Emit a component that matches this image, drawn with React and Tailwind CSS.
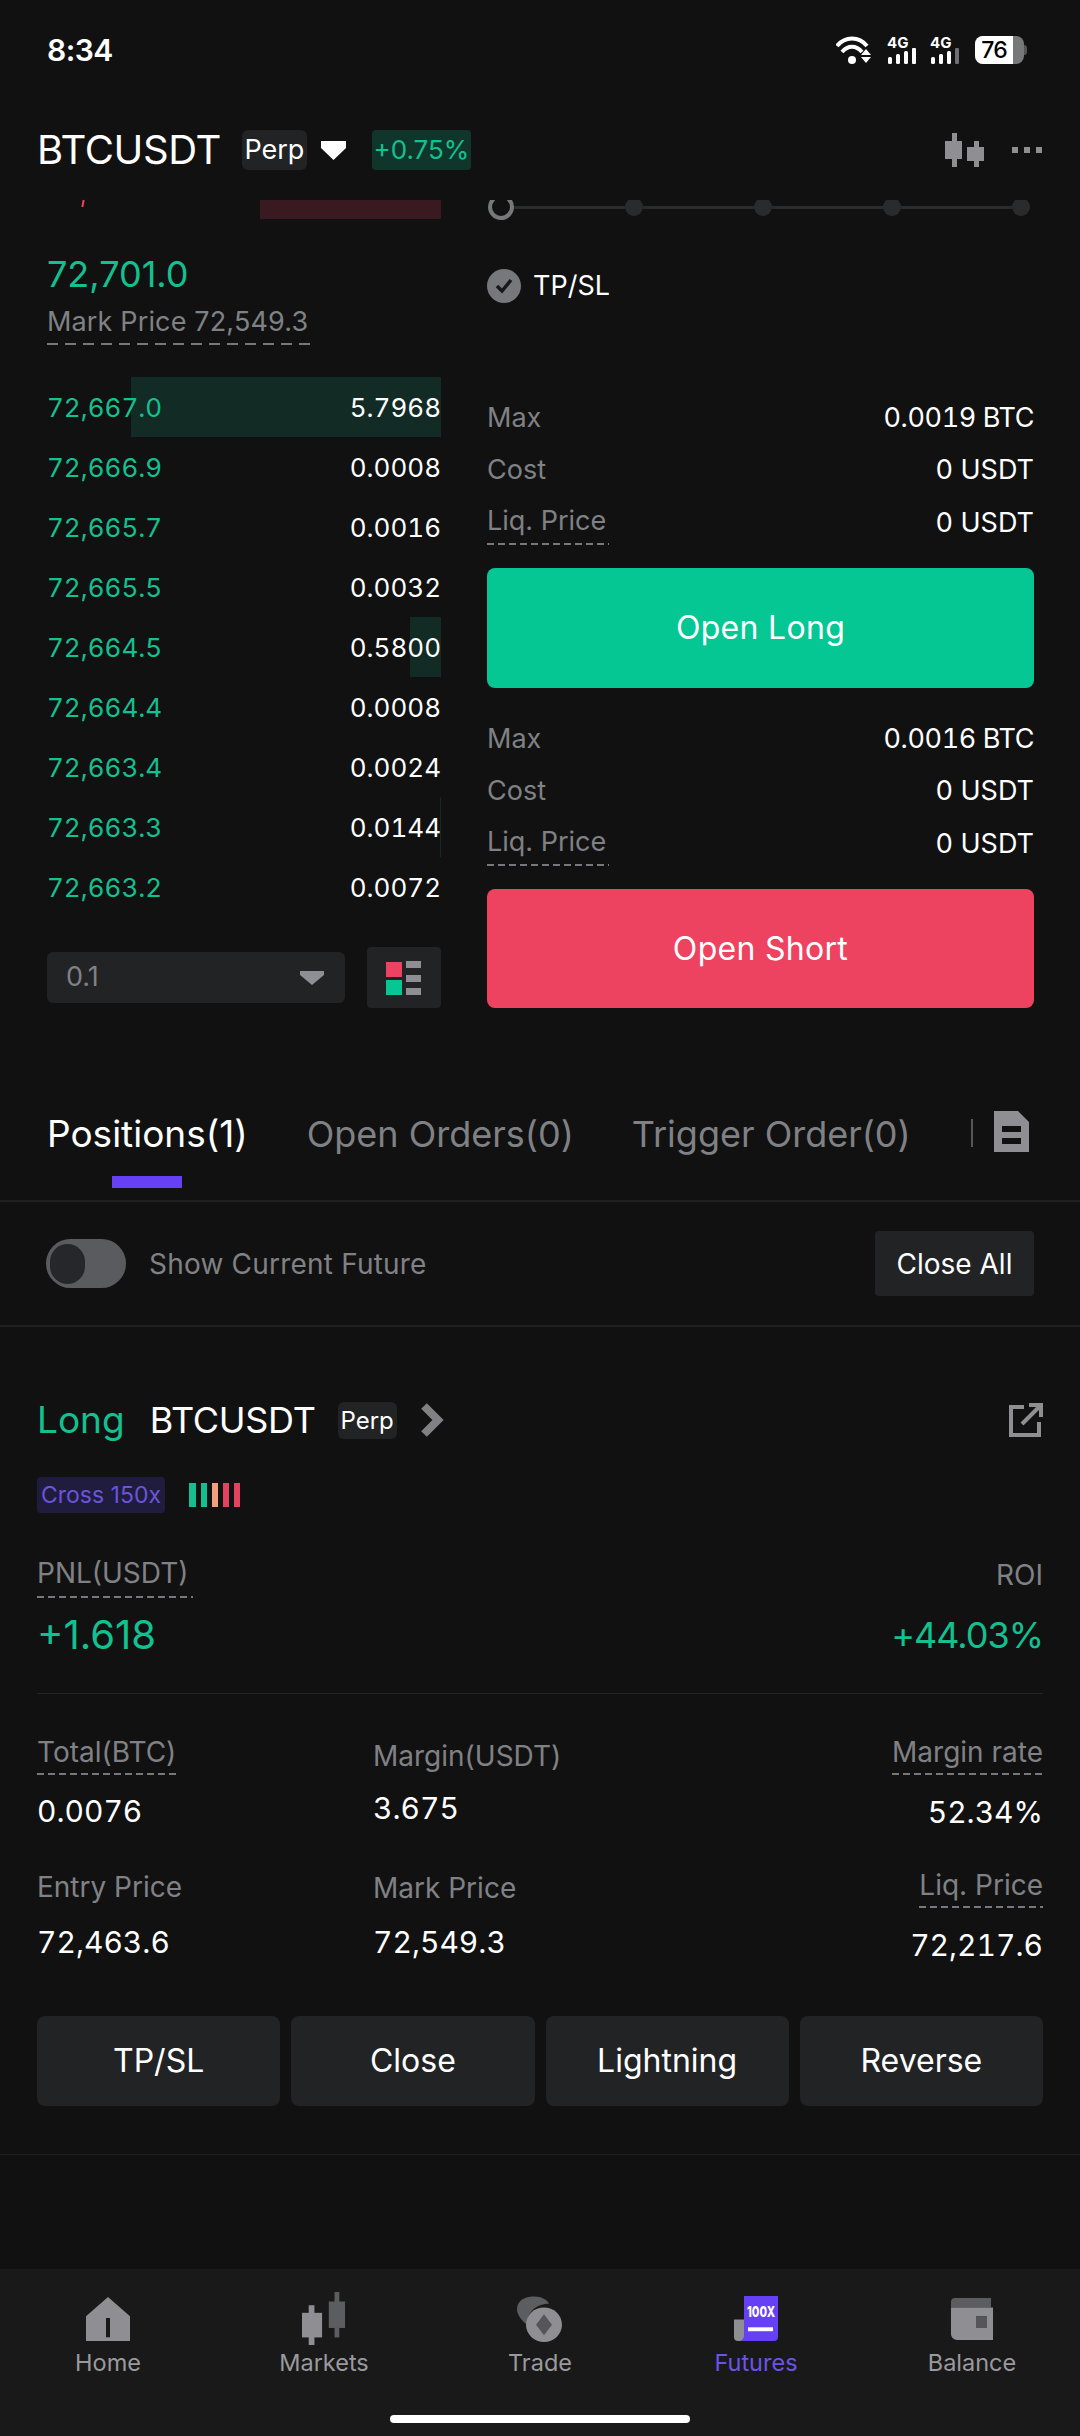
import React from 'react';

const asks = [
  ['72,667.0', '5.7968', 'w-[310px]'],
  ['72,666.9', '0.0008', 'w-0'],
  ['72,665.7', '0.0016', 'w-0'],
  ['72,665.5', '0.0032', 'w-0'],
  ['72,664.5', '0.5800', 'w-[31px]'],
  ['72,664.4', '0.0008', 'w-0'],
  ['72,663.4', '0.0024', 'w-0'],
  ['72,663.3', '0.0144', 'w-[1px]'],
  ['72,663.2', '0.0072', 'w-0'],
];

function Dash({ className = '' }) {
  return <div className={`h-[2px] bg-[repeating-linear-gradient(90deg,#77787b_0_7px,transparent_7px_11px)] ${className}`} />;
}

function StatusBar() {
  return (
    <div className="h-[100px] pl-[47px] pr-[53px] flex items-center justify-between">
      <span className="text-[30px] font-semibold text-white tracking-[-0.5px]">8:34</span>
      <div className="flex items-center gap-[13px]">
        <svg className="mr-[3px]" width="35" height="28" viewBox="0 0 35 28" fill="none">
          <path d="M1 10 C9 0 23 0 31 10" stroke="#fff" strokeWidth="4" />
          <path d="M6 16 C12 9 20 9 26 16" stroke="#fff" strokeWidth="4" />
          <circle cx="16" cy="24" r="4" fill="#fff" />
          <path d="M30 13l5 6h-10zM25 21h10l-5 6z" fill="#fff" />
        </svg>
        <Signal dim={false} />
        <Signal dim />
        <div className="flex items-center ml-[2px]">
          <div className="w-[49px] h-[28px] rounded-[8px] overflow-hidden bg-[#77787a] flex">
            <div className="w-[38px] bg-white text-black text-[23px] leading-[28px] text-center font-medium tracking-[-1px]">76</div>
          </div>
          <div className="w-[3px] h-[10px] bg-[#55565a] rounded-r-sm" />
        </div>
      </div>
    </div>
  );
}

function Signal({ dim }) {
  return (
    <div className="w-[30px] h-[28px] flex flex-col justify-between">
      <span className="text-[15px] leading-[13px] font-bold text-white h-[12px]">4G</span>
      <svg width="30" height="16" viewBox="0 0 30 16">
        <rect x="1" y="9" width="4" height="7" rx="1.5" fill="#fff" />
        <rect x="9" y="6" width="4" height="10" rx="1.5" fill="#fff" />
        <rect x="17" y="3" width="4" height="13" rx="1.5" fill="#fff" />
        <rect x="25" y="0" width="4" height="16" rx="1" fill={dim ? '#6e6f72' : '#fff'} />
      </svg>
    </div>
  );
}

function Header() {
  return (
    <div className="h-[100px] pl-[37px] pr-[38px] flex items-center text-white">
      <span className="text-[40px] tracking-[-0.4px] leading-[48px]">BTCUSDT</span>
      <span className="ml-[21px] h-[40px] w-[65px] rounded-[6px] bg-[#222325] text-[27px] leading-[40px] text-center">Perp</span>
      <svg className="ml-[14px]" width="25" height="19" viewBox="0 0 25 19"><path d="M0 0h25v7L12.5 19 0 7z" fill="#fff" /></svg>
      <span className="ml-[26px] h-[40px] w-[99px] rounded-[4px] bg-[#10362c] text-[#14c08f] text-[26px] leading-[40px] text-center">+0.75%</span>
      <svg className="ml-auto" width="40" height="34" viewBox="0 0 40 34" fill="#8e8e93">
        <rect x="7" y="0" width="5" height="34" />
        <rect x="0" y="8" width="17" height="18" />
        <rect x="29" y="8" width="5" height="26" />
        <rect x="22" y="14" width="17" height="14" />
      </svg>
      <div className="ml-[27px] flex gap-[6px]">
        <div className="w-[6px] h-[6px] bg-[#8e8e93]" />
        <div className="w-[6px] h-[6px] bg-[#8e8e93]" />
        <div className="w-[6px] h-[6px] bg-[#8e8e93]" />
      </div>
    </div>
  );
}

function OrderBook() {
  return (
    <div className="w-[394px] shrink-0">
      <div className="h-[19px] flex justify-between">
        <div className="ml-[35px] w-[2px] h-[7px] bg-[#ee4360] rotate-12" />
        <div className="w-[181px] h-[19px] bg-[#3a1a20]" />
      </div>
      <div className="mt-[33px] text-[#14c08f] text-[36px] leading-[44px]">72,701.0</div>
      <div className="mt-[9px] text-[#808184] text-[27px] tracking-[0.15px] leading-[34px]">Mark Price 72,549.3</div>
      <div className="mt-[4px] w-[269px] h-[2px] bg-[repeating-linear-gradient(90deg,#77787b_0_11px,transparent_11px_18px)]" />
      <div className="mt-[32px]">
        {asks.map(([price, size, bar]) => (
          <div key={price} className="relative h-[60px] flex items-center justify-between text-[26px] tabular-nums">
            <div className={`absolute right-0 top-0 h-[60px] bg-[#122b25] ${bar}`} />
            <span className="relative text-[#14c08f]">{price}</span>
            <span className="relative text-white">{size}</span>
          </div>
        ))}
      </div>
      <div className="mt-[30px] flex items-center justify-between">
        <div className="w-[298px] h-[51px] rounded-[6px] bg-[#222325] flex items-center justify-between pl-[19px] pr-[21px]">
          <span className="text-[#808184] text-[27px]">0.1</span>
          <svg width="24" height="14" viewBox="0 0 24 14"><path d="M0 0h24v4L12 14 0 4z" fill="#8e8e93" /></svg>
        </div>
        <div className="w-[74px] h-[61px] rounded-[4px] bg-[#222325] flex items-center justify-center">
          <svg width="36" height="34" viewBox="0 0 36 34">
            <rect x="0" y="1" width="16" height="15" fill="#ee4360" />
            <rect x="0" y="19" width="16" height="15" fill="#05c793" />
            <rect x="20" y="0" width="15" height="7" fill="#8e8e93" />
            <rect x="20" y="14" width="15" height="7" fill="#8e8e93" />
            <rect x="20" y="27" width="15" height="7" fill="#8e8e93" />
          </svg>
        </div>
      </div>
    </div>
  );
}

function Slider() {
  return (
    <div className="h-[24px] overflow-hidden pr-[4px]">
      <div className="-mt-[7px] h-[28px] flex items-center">
        <div className="w-[26px] h-[26px] rounded-full border-[4px] border-[#77787b] shrink-0 ml-[1px]" />
        {[0, 1, 2, 3].map((i) => (
          <React.Fragment key={i}>
            <div className="flex-1 h-[3px] bg-[#2a2b2d]" />
            <div className="w-[18px] h-[18px] rounded-full bg-[#2a2b2d] shrink-0" />
          </React.Fragment>
        ))}
      </div>
    </div>
  );
}

function OrderInfo({ max }) {
  return (
    <div className="text-[27px] leading-[34px]">
      <div className="h-[34px] flex justify-between"><span className="text-[#808184]">Max</span><span className="text-white tabular-nums tracking-[-0.4px]">{max} BTC</span></div>
      <div className="mt-[18px] h-[34px] flex justify-between"><span className="text-[#808184]">Cost</span><span className="text-white">0 USDT</span></div>
      <div className="mt-[17px] h-[34px] flex justify-between">
        <div className="w-[122px]">
          <span className="text-[#808184]">Liq. Price</span>
          <Dash className="mt-[5px]" />
        </div>
        <span className="text-white mt-[2px]">0 USDT</span>
      </div>
    </div>
  );
}

function OrderForm() {
  return (
    <div className="flex-1">
      <Slider />
      <div className="mt-[45px] h-[34px] flex items-center">
        <div className="w-[34px] h-[34px] rounded-full bg-[#77787b] flex items-center justify-center">
          <svg width="20" height="16" viewBox="0 0 20 16" fill="none"><path d="M3 8l5 5 9-11" stroke="#17181a" strokeWidth="3.5" /></svg>
        </div>
        <span className="ml-[12px] text-white text-[27px]">TP/SL</span>
      </div>
      <div className="mt-[98px]"><OrderInfo max="0.0019" /></div>
      <div className="mt-[30px] h-[120px] rounded-[8px] bg-[#05c793] flex items-center justify-center text-white text-[32px] tracking-[0.3px]">Open Long</div>
      <div className="mt-[34px]"><OrderInfo max="0.0016" /></div>
      <div className="mt-[30px] h-[119px] rounded-[8px] bg-[#ee4360] flex items-center justify-center text-white text-[32px] tracking-[0.3px]">Open Short</div>
    </div>
  );
}

function Tabs() {
  return (
    <div className="h-[194px] border-b-2 border-[#1e1f21] pt-[103px] pl-[47px] pr-[51px] flex items-start text-[36px] leading-[46px]">
      <div className="flex flex-col items-center">
        <span className="text-white text-[37px]">Positions(1)</span>
        <div className="mt-[19px] w-[70px] h-[12px] bg-[#6640f5]" />
      </div>
      <span className="ml-[59px] text-[#808184]">Open Orders(0)</span>
      <span className="ml-[58px] text-[#808184]">Trigger Order(0)</span>
      <div className="ml-auto mt-[8px] w-[2px] h-[28px] bg-[#55565a]" />
      <svg className="ml-[21px]" width="35" height="41" viewBox="0 0 35 41" fill="#8e8e93">
        <path fillRule="evenodd" d="M0 0h24l11 11v30H0zM8 15v6h19v-6zM8 27v6h19v-6z" />
      </svg>
    </div>
  );
}

function Toggle() {
  return (
    <div className="h-[125px] border-b-2 border-[#1e1f21] px-[46px] flex items-center">
      <div className="w-[80px] h-[49px] rounded-full bg-[#5a5b5e] flex items-center pl-[4px]">
        <div className="w-[35px] h-[40px] rounded-full bg-[#26272a]" />
      </div>
      <span className="ml-[23px] text-[#808184] text-[28px] tracking-[0.2px]">Show Current Future</span>
      <div className="ml-auto w-[159px] h-[65px] rounded-[4px] bg-[#222325] flex items-center justify-center text-white text-[28px]">Close All</div>
    </div>
  );
}

function Stat({ label, value, dash, right, labelTop = 'mt-0', valueTop = 'mt-0' }) {
  return (
    <div className={`flex flex-col ${right ? 'items-end' : 'items-start'}`}>
      <div className={labelTop}>
        <div className="text-[#808184] text-[28px] leading-[34px]">{label}</div>
        {dash && <Dash className="mt-[4px]" />}
      </div>
      <div className={`${valueTop} text-white text-[30px] tabular-nums leading-[40px]`}>{value}</div>
    </div>
  );
}

function PositionCard() {
  return (
    <div className="px-[37px] pt-[73px]">
      <div className="h-[40px] flex items-center">
        <span className="text-[#14c08f] text-[37px] leading-[48px]">Long</span>
        <span className="ml-[25px] text-white text-[36px] tracking-[-0.3px] leading-[48px]">BTCUSDT</span>
        <span className="ml-[22px] w-[59px] h-[37px] rounded-[6px] bg-[#222325] text-white text-[24px] leading-[37px] text-center">Perp</span>
        <svg className="ml-[23px]" width="24" height="34" viewBox="0 0 24 34" fill="none"><path d="M4 3l14 14L4 31" stroke="#808184" strokeWidth="8" /></svg>
        <svg className="ml-auto" width="34" height="34" viewBox="0 0 34 34" fill="none" stroke="#8e8e93" strokeWidth="4">
          <path d="M15 4H2v28h28V19" />
          <path d="M20 2h12v12M31 3L13 21" />
        </svg>
      </div>
      <div className="mt-[37px] h-[36px] flex items-center">
        <span className="w-[128px] h-[36px] rounded-[4px] bg-[#201c3d] text-[#6a54d8] text-[23px] leading-[36px] text-center">Cross 150x</span>
        <div className="ml-[24px] flex gap-[5px]">
          <div className="w-[7px] h-[24px] bg-[#14c08f]" />
          <div className="w-[6px] h-[24px] bg-[#14c08f]" />
          <div className="w-[6px] h-[24px] bg-[#f2a07b]" />
          <div className="w-[6px] h-[24px] bg-[#e2435f]" />
          <div className="w-[6px] h-[24px] bg-[#e2435f]" />
        </div>
      </div>
      <div className="mt-[43px] flex justify-between">
        <div>
          <div className="text-[#808184] text-[28px] leading-[34px]">PNL(USDT)</div>
          <Dash className="mt-[6px] w-[156px]" />
          <div className="mt-[14px] text-[#14c08f] text-[40px] leading-[46px]">+1.618</div>
        </div>
        <div className="flex flex-col items-end">
          <div className="mt-[2px] text-[#808184] text-[28px] leading-[34px]">ROI</div>
          <div className="mt-[20px] text-[#14c08f] text-[36px] tracking-[-1px] leading-[46px]">+44.03%</div>
        </div>
      </div>
      <div className="mt-[35px] h-[1px] bg-[#232427]" />
      <div className="mt-[41px] grid grid-cols-[336px_1fr_auto]">
        <Stat label="Total(BTC)" value="0.0076" dash valueTop="mt-[16px]" />
        <Stat label="Margin(USDT)" value="3.675" labelTop="mt-[4px]" valueTop="mt-[15px]" />
        <Stat label="Margin rate" value="52.34%" dash right valueTop="mt-[17px]" />
        <Stat label="Entry Price" value="72,463.6" labelTop="mt-[38px]" valueTop="mt-[18px]" />
        <Stat label="Mark Price" value="72,549.3" labelTop="mt-[39px]" valueTop="mt-[17px]" />
        <Stat label="Liq. Price" value="72,217.6" dash right labelTop="mt-[36px]" valueTop="mt-[17px]" />
      </div>
      <div className="mt-[51px] grid grid-cols-4 gap-[11px]">
        {['TP/SL', 'Close', 'Lightning', 'Reverse'].map((t) => (
          <div key={t} className="h-[90px] rounded-[8px] bg-[#222325] flex items-center justify-center text-white text-[32px]">{t}</div>
        ))}
      </div>
    </div>
  );
}

function NavItem({ label, active, children }) {
  return (
    <div className="flex flex-col items-center">
      <div className="h-[53px] flex items-end">{children}</div>
      <span className={`mt-[3px] text-[23.5px] leading-[30px] ${active ? 'text-[#6a54e8]' : 'text-[#9a9a9e]'}`}>{label}</span>
    </div>
  );
}

function BottomNav() {
  return (
    <div className="mt-auto h-[167px] bg-[#191919] relative">
      <div className="pt-[23px] grid grid-cols-5">
        <NavItem label="Home">
          <svg className="mb-[4px]" width="44" height="44" viewBox="0 0 44 46" preserveAspectRatio="none">
            <path fillRule="evenodd" d="M22 0l22 20v26H0V20zM20 22v20h4V22z" fill="#8e8e93" />
          </svg>
        </NavItem>
        <NavItem label="Markets">
          <svg width="44" height="53" viewBox="0 0 46 56" preserveAspectRatio="none">
            <rect x="7" y="14" width="6" height="42" fill="#8e8e93" />
            <rect x="0" y="22" width="21" height="26" fill="#8e8e93" />
            <rect x="34" y="0" width="5" height="48" fill="#5c5d60" />
            <rect x="28" y="10" width="17" height="28" fill="#5c5d60" />
          </svg>
        </NavItem>
        <NavItem label="Trade">
          <svg className="mb-[3px]" width="46" height="46" viewBox="0 0 46 48" preserveAspectRatio="none">
            <path d="M12 1 C22 -1 30 3 32 8 C18 8 10 18 10 30 C3 24 0 18 0 14 C0 7 5 2 12 1z" fill="#5c5d60" />
            <circle cx="27" cy="30" r="18" fill="#8e8e93" />
            <path d="M27 19l8 11-8 11-8-11z" fill="#55565a" />
          </svg>
        </NavItem>
        <NavItem label="Futures" active>
          <svg className="mb-[4px]" width="44" height="45" viewBox="0 0 44 46" preserveAspectRatio="none">
            <path d="M0 24h12v22H4a4 4 0 0 1-4-4z" fill="#8e8e93" />
            <path d="M10 0h34v42a4 4 0 0 1-4 4H6a6 6 0 0 0 4-6z" fill="#6640f5" />
            <text transform="translate(27 21) scale(1 1.4)" textAnchor="middle" fontSize="11" fontWeight="800" fill="#fff">100X</text>
            <rect x="14" y="32" width="25" height="4" fill="#fff" />
          </svg>
        </NavItem>
        <NavItem label="Balance">
          <svg className="mb-[5px]" width="42" height="42" viewBox="0 0 42 44" preserveAspectRatio="none">
            <path d="M4 0h36v10H0V4a4 4 0 0 1 4-4z" fill="#5c5d60" />
            <path fillRule="evenodd" d="M0 10h42v34H6a6 6 0 0 1-6-6zM25 19v12h11V19z" fill="#8e8e93" />
            <rect x="25" y="19" width="11" height="12" fill="#55565a" />
          </svg>
        </NavItem>
      </div>
      <div className="absolute left-[390px] bottom-[13px] w-[300px] h-[8px] rounded-full bg-white" />
    </div>
  );
}

export default function App() {
  return (
    <div className="w-[1080px] h-[2436px] bg-[#111112] flex flex-col font-[family-name:Inter,sans-serif] overflow-hidden">
      <StatusBar />
      <Header />
      <div className="h-[808px] pl-[47px] pr-[46px] flex gap-[46px]">
        <OrderBook />
        <OrderForm />
      </div>
      <Tabs />
      <Toggle />
      <PositionCard />
      <div className="mt-[48px] h-[1px] bg-[#1e1f21]" />
      <BottomNav />
    </div>
  );
}
